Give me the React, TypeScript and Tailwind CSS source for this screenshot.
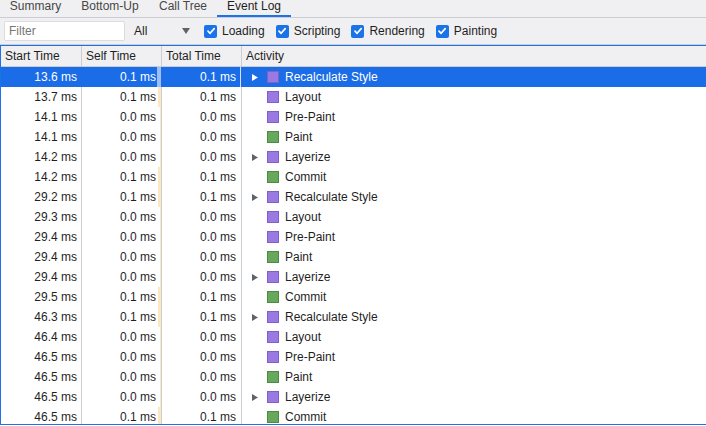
import { useState } from "react";

type Row = {
  start: string;
  self: string;
  total: string;
  name: string;
  kind: "render" | "paint";
  expandable?: boolean;
};

const rows: Row[] = [
  { start: "13.6", self: "0.1", total: "0.1", name: "Recalculate Style", kind: "render", expandable: true },
  { start: "13.7", self: "0.1", total: "0.1", name: "Layout", kind: "render" },
  { start: "14.1", self: "0.0", total: "0.0", name: "Pre-Paint", kind: "render" },
  { start: "14.1", self: "0.0", total: "0.0", name: "Paint", kind: "paint" },
  { start: "14.2", self: "0.0", total: "0.0", name: "Layerize", kind: "render", expandable: true },
  { start: "14.2", self: "0.1", total: "0.1", name: "Commit", kind: "paint" },
  { start: "29.2", self: "0.1", total: "0.1", name: "Recalculate Style", kind: "render", expandable: true },
  { start: "29.3", self: "0.0", total: "0.0", name: "Layout", kind: "render" },
  { start: "29.4", self: "0.0", total: "0.0", name: "Pre-Paint", kind: "render" },
  { start: "29.4", self: "0.0", total: "0.0", name: "Paint", kind: "paint" },
  { start: "29.4", self: "0.0", total: "0.0", name: "Layerize", kind: "render", expandable: true },
  { start: "29.5", self: "0.1", total: "0.1", name: "Commit", kind: "paint" },
  { start: "46.3", self: "0.1", total: "0.1", name: "Recalculate Style", kind: "render", expandable: true },
  { start: "46.4", self: "0.0", total: "0.0", name: "Layout", kind: "render" },
  { start: "46.5", self: "0.0", total: "0.0", name: "Pre-Paint", kind: "render" },
  { start: "46.5", self: "0.0", total: "0.0", name: "Paint", kind: "paint" },
  { start: "46.5", self: "0.0", total: "0.0", name: "Layerize", kind: "render", expandable: true },
  { start: "46.5", self: "0.1", total: "0.1", name: "Commit", kind: "paint" },
];

const tabs = [
  { label: "Summary", w: "w-[71px]" },
  { label: "Bottom-Up", w: "w-[78px]" },
  { label: "Call Tree", w: "w-[68px]" },
  { label: "Event Log", w: "w-[74px]" },
];

const filters = ["Loading", "Scripting", "Rendering", "Painting"];

function Check() {
  return (
    <span className="flex h-[13px] w-[13px] items-center justify-center rounded-[2px] bg-[#1a73e8]">
      <svg width="10" height="10" viewBox="0 0 10 10">
        <path d="M2 5.2 L4.1 7.3 L8.2 2.6" fill="none" stroke="white" strokeWidth="1.7" strokeLinecap="round" strokeLinejoin="round" />
      </svg>
    </span>
  );
}

export default function App() {
  const [selected, setSelected] = useState(0);
  const [tab, setTab] = useState(3);

  return (
    <div className="h-[426px] w-[706px] overflow-hidden bg-white text-[12px] text-[#1f1f1f] font-['Liberation_Sans',Arial,sans-serif]">
      {/* tabs */}
      <div className="flex h-[18px] items-end border-b border-[#cbcdd1] bg-[#f0f0f2]">
        {tabs.map((t, i) => (
          <button
            key={t.label}
            type="button"
            onClick={() => setTab(i)}
            className={`flex shrink-0 flex-col items-center ${t.w}`}
          >
            <span className={`leading-[13px] ${i === tab ? "text-[#1f1f1f]" : "text-[#474747]"}`}>{t.label}</span>
            <span className={`mt-[2px] h-[2px] w-full ${i === tab ? "bg-[#1a73e8]" : "bg-transparent"}`} />
          </button>
        ))}
      </div>

      {/* toolbar */}
      <div className="flex h-[27px] items-center border-b border-[#cbcdd1] bg-[#f0f0f2] pl-[4px]">
        <div className="flex h-[20px] w-[121px] items-center rounded-[2px] border border-[#dcdcdf] bg-white pl-[4px] text-[#767676]">
          Filter
        </div>
        <div className="ml-[9px] flex w-[56px] items-center justify-between">
          <span>All</span>
          <svg width="8" height="6" viewBox="0 0 8 6">
            <path d="M0 0 L8 0 L4 6 Z" fill="#5f6368" />
          </svg>
        </div>
        <div className="ml-[14px] flex items-center">
          {filters.map((f, i) => (
            <label key={f} className={`flex items-center gap-[5px] ${i > 0 ? "ml-[11px]" : ""}`}>
              <Check />
              <span>{f}</span>
            </label>
          ))}
        </div>
      </div>

      {/* table */}
      <div className="h-[380px] w-[712px] overflow-hidden border border-[#1a73e8]">
        <div className="flex h-[21px] items-center border-b border-[#cbcdd1] bg-[#f0f0f2]">
          <div className="flex h-full w-[81px] items-center border-r border-[#cbcdd1] pl-[4px]">Start Time</div>
          <div className="flex h-full w-[80px] items-center border-r border-[#cbcdd1] pl-[4px]">Self Time</div>
          <div className="flex h-full w-[80px] items-center border-r border-[#cbcdd1] pl-[4px]">Total Time</div>
          <div className="flex h-full flex-1 items-center pl-[4px]">Activity</div>
        </div>

        {rows.map((r, i) => {
          const sel = i === selected;
          const div = sel ? "border-[#1a6ce7]" : "border-[#cbcdd1]";
          const selfBar = r.self === "0.1" ? "w-[3px]" : "w-[1px]";
          return (
            <div
              key={i}
              onClick={() => setSelected(i)}
              className={`flex h-[20px] items-center ${sel ? "bg-[#1a6ce7] text-white" : "bg-white"}`}
            >
              <div className={`flex h-full w-[81px] items-center justify-end border-r pr-[4px] ${div}`}>
                {r.start} ms
              </div>
              <div className={`flex h-full w-[80px] items-center justify-end border-r ${div}`}>
                <span>{r.self} ms</span>
                <span className="flex h-full w-[5px] justify-end">
                  <span className={`h-full ${sel ? "w-[4px] bg-[#9dbff5]" : `${selfBar} bg-[#fde6c2]`}`} />
                </span>
              </div>
              <div className={`flex h-full w-[80px] items-center justify-end border-r ${div}`}>
                <span>{r.total} ms</span>
                <span className="flex h-full w-[5px] justify-end">
                  <span className={`h-full w-[1px] ${sel ? "bg-[#d6e4fb]" : "bg-transparent"}`} />
                </span>
              </div>
              <div className="flex h-full flex-1 items-center pl-[9px]">
                <span className="flex w-[7px] justify-center">
                  {r.expandable && (
                    <svg width="6" height="7" viewBox="0 0 6 7">
                      <path d="M0 0 L6 3.5 L0 7 Z" fill={sel ? "#ffffff" : "#5f6368"} />
                    </svg>
                  )}
                </span>
                <span
                  className={`ml-[9px] h-[12px] w-[12px] border ${
                    r.kind === "render" ? "border-[#7e60c9] bg-[#9b79e3]" : "border-[#4d8b45] bg-[#67a85d]"
                  }`}
                />
                <span className="ml-[6px]">{r.name}</span>
              </div>
            </div>
          );
        })}
      </div>
    </div>
  );
}
